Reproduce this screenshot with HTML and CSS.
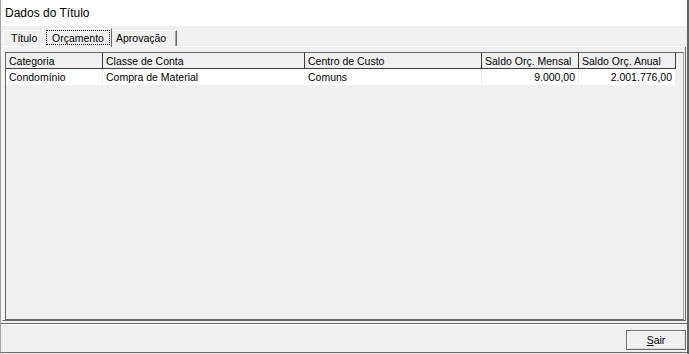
FILE: index.html
```html
<!DOCTYPE html>
<html lang="pt-BR">
<head>
  <meta charset="UTF-8">
  <title>Dados do Título</title>
  <link rel="stylesheet" href="styles.css">
</head>
<body>
  <div class="window">
    <div class="caption">Dados do Título</div>

    <!-- Abas -->
    <div class="tabs">
      <div class="tab tab-titulo">Título</div>
      <div class="tab tab-active"><span class="focus">Orçamento</span></div>
      <div class="tab tab-aprov">Aprovação</div>
    </div>

    <!-- Página da aba -->
    <div class="page">
      <div class="grid">
        <table>
          <thead>
            <tr>
              <th class="c1">Categoria</th>
              <th class="c2">Classe de Conta</th>
              <th class="c3">Centro de Custo</th>
              <th class="c4">Saldo Orç. Mensal</th>
              <th class="c5">Saldo Orç. Anual</th>
            </tr>
          </thead>
          <tbody>
            <tr>
              <td>Condomínio</td>
              <td>Compra de Material</td>
              <td>Comuns</td>
              <td class="num">9.000,00</td>
              <td class="num">2.001.776,00</td>
            </tr>
          </tbody>
        </table>
      </div>
    </div>

    <div class="footer">
      <button class="btn"><u>S</u>air</button>
    </div>
  </div>
</body>
</html>
```

FILE: styles.css
```css
body {
  margin: 0;
  font-family: "Liberation Sans", Arial, sans-serif;
  font-size: 10.5px;
  color: #000;
  background: #f0f0f0;
}

.window {
  width: 689px;
  height: 354px;
  box-sizing: border-box;
  border-left: 1px solid #a0a0a0;
  border-right: 2px solid #646464;
  display: flex;
  flex-direction: column;
}

.caption {
  height: 26px;
  line-height: 26px;
  padding-left: 4px;
  background: #fff;
  font-size: 12px;
}

.tabs {
  height: 20px;
  display: flex;
  align-items: flex-end;
  padding-left: 2px;
}

.tab {
  height: 16px;
  line-height: 15px;
  box-sizing: border-box;
  border-top: 1px solid #fff;
  border-left: 1px solid #fff;
  white-space: nowrap;
}

.tab-titulo {
  width: 40px;
  padding-left: 7px;
}

.tab-active {
  width: 69px;
  height: 19px;
  margin-bottom: -1px;
  padding: 1px 0 0 2px;
  border-right: 1px solid #696969;
  background: #f0f0f0;
  position: relative;
}

.focus {
  display: inline-block;
  height: 15px;
  line-height: 14px;
  padding: 0 5px;
  border: 1px dotted #000;
  box-sizing: border-box;
}

.tab-aprov {
  width: 65px;
  padding-left: 4px;
  border-left: none;
  border-right: 1px solid #696969;
  box-shadow: inset -1px 0 #a0a0a0;
}

.page {
  margin: 0 1px;
  padding: 5px 1px 0 2px;
  border-top: 1px solid #fff;
  border-left: 1px solid #fff;
  border-right: 1px solid #696969;
  border-bottom: 1px solid #696969;
}

.grid {
  height: 268px;
  box-sizing: border-box;
  border: 1px solid #696969;
  border-right-color: #a0a0a0;
  background: #f0f0f0;
}

table {
  border-spacing: 0;
  table-layout: fixed;
  width: 670px;
}

th, td {
  height: 15px;
  padding: 0 3px;
  box-sizing: border-box;
  text-align: left;
  font-weight: normal;
  white-space: nowrap;
  overflow: hidden;
}

th {
  height: 16px;
  background: #f0f0f0;
  border-right: 1px solid #3c3c3c;
  border-bottom: 1px solid #3c3c3c;
}

td {
  height: 16px;
  background: #fff;
  border-right: 1px solid #f0f0f0;
}

.c1 { width: 97px; }
.c2 { width: 202px; }
.c3 { width: 177px; }
.c4 { width: 97px; }
.c5 { width: 97px; }

.num {
  text-align: right;
}

.footer {
  margin-top: 2px;
  height: 30px;
  box-sizing: border-box;
  border-top: 1px solid #696969;
  border-bottom: 1px solid #696969;
  box-shadow: inset 0 1px #fff;
  display: flex;
  justify-content: flex-end;
  align-items: flex-start;
  padding: 6px 1px 0 0;
}

.btn {
  width: 60px;
  height: 20px;
  padding: 0;
  font-family: inherit;
  font-size: 10.5px;
  color: #000;
  background: #f0f0f0;
  border: 1px solid #6d6d6d;
  box-shadow: inset 1px 1px #fff, inset -1px -1px #dcdcdc;
}
```
